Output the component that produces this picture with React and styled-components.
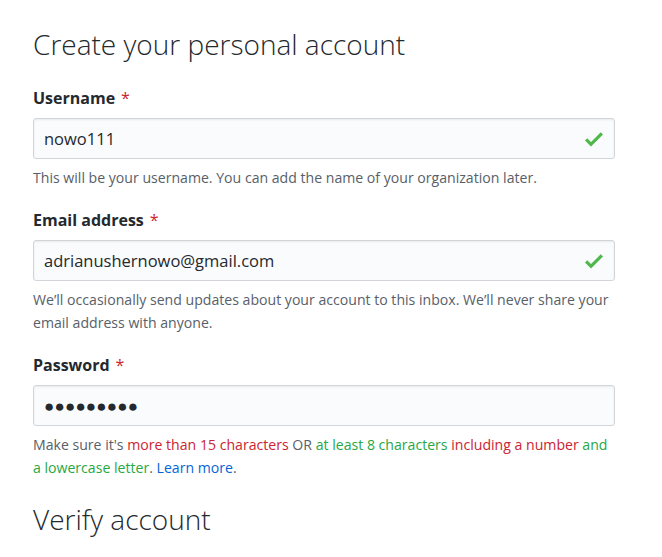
import React from 'react';
import styled, { createGlobalStyle } from 'styled-components';

const GlobalStyle = createGlobalStyle`
    body {
        margin: 0;
        background-color: white;
        font-family: "Open Sans", "Noto Sans", sans-serif;
        color: #24292e;
    }
`;

const Container = styled.div`
    width: 662px;
    height: 557px;
    overflow: hidden;
    padding: 26px 47px 0 33px;
    box-sizing: border-box;
`;

const Heading = styled.h2`
    margin: ${props => props.later ? "1px 0 0" : "0"};
    font-size: 28px;
    font-weight: 300;
    line-height: 36px;
`;

const Form = styled.div`
    display: flex;
    flex-direction: column;
    margin-top: 26px;
`;

const Field = styled.div`
    display: flex;
    flex-direction: column;
    margin-bottom: 21px;
`;

const Label = styled.label`
    font-size: 16px;
    font-weight: 700;
    line-height: 20px;
    margin-bottom: 10px;
`;

const Required = styled.span`
    color: #cb2431;
    font-weight: 400;
    margin-left: 6px;
`;

const InputBox = styled.div`
    display: flex;
    align-items: center;
    justify-content: space-between;
    height: 41px;
    padding: 0 8px 0 10px;
    box-sizing: border-box;
    background-color: #fafbfc;
    border: 1px solid #d1d5da;
    border-radius: 3px;
    box-shadow: inset 0 1px 2px rgba(27, 31, 35, 0.075);
`;

const Value = styled.span`
    color: #24292e;
    font-size: ${props => props.secret ? "17px" : "16.5px"};
    letter-spacing: ${props => props.secret ? "0.2px" : "0"};
`;

const Note = styled.p`
    margin: 7px 0 0;
    font-size: 14.1px;
    line-height: 23px;
    color: #586069;
`;

const Hint = styled.span`
    color: ${props => props.tone === "bad" ? "#cb2431" : props.tone === "good" ? "#28a745" : "#586069"};
`;

const Link = styled.a`
    color: #0366d6;
    text-decoration: none;
`;

const Check = () => (
    <svg width="24" height="24" viewBox="0 0 12 16">
        <path fill="#4fb84a" fillRule="evenodd" d="M12 5l-8 8-4-4 1.5-1.5L4 10l6.5-6.5L12 5z" />
    </svg>
);

export default function App() {
    return (
        <Container>
            <GlobalStyle />
            <Heading>Create your personal account</Heading>
            <Form>
                <Field>
                    <Label>Username<Required>*</Required></Label>
                    <InputBox>
                        <Value>nowo111</Value>
                        <Check />
                    </InputBox>
                    <Note>This will be your username. You can add the name of your organization later.</Note>
                </Field>
                <Field>
                    <Label>Email address<Required>*</Required></Label>
                    <InputBox>
                        <Value>adrianushernowo@gmail.com</Value>
                        <Check />
                    </InputBox>
                    <Note>We’ll occasionally send updates about your account to this inbox. We’ll never share your email address with anyone.</Note>
                </Field>
                <Field>
                    <Label>Password<Required>*</Required></Label>
                    <InputBox>
                        <Value secret>●●●●●●●●●</Value>
                    </InputBox>
                    <Note>
                        Make sure it's <Hint tone="bad">more than 15 characters</Hint> OR <Hint tone="good">at least 8 characters</Hint> <Hint tone="bad">including a number</Hint> <Hint tone="good">and a lowercase letter</Hint>. <Link href="#">Learn more</Link>.
                    </Note>
                </Field>
            </Form>
            <Heading later>Verify account</Heading>
        </Container>
    );
}
